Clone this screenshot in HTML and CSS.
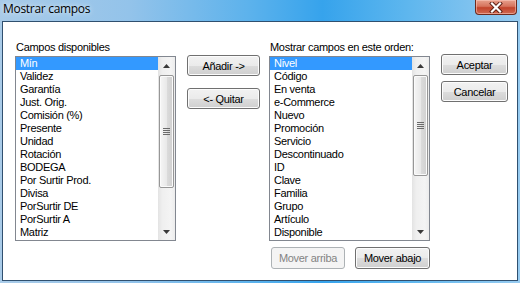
FILE: index.html
```html
<!DOCTYPE html>
<html lang="es">
<head>
    <meta charset="UTF-8">
    <title>Mostrar campos</title>
    <link rel="stylesheet" href="styles.css">
</head>
<body>
    <div class="window">
        <div class="titlebar">
            <span class="title">Mostrar campos</span>
            <div class="close">
                <svg width="14" height="11" viewBox="0 0 14 11">
                    <path d="M3 1.5 L11 9.5 M11 1.5 L3 9.5" stroke="#5a1d12" stroke-width="4" stroke-linecap="square"/>
                    <path d="M3 1.5 L11 9.5 M11 1.5 L3 9.5" stroke="#fff" stroke-width="2.2" stroke-linecap="square"/>
                </svg>
            </div>
        </div>

        <div class="client">
            <!-- available fields -->
            <div class="column">
                <div class="caption">Campos disponibles</div>
                <div class="listbox">
                    <ul class="items">
                        <li class="selected">Mín</li>
                        <li>Validez</li>
                        <li>Garantía</li>
                        <li>Just. Orig.</li>
                        <li>Comisión (%)</li>
                        <li>Presente</li>
                        <li>Unidad</li>
                        <li>Rotación</li>
                        <li>BODEGA</li>
                        <li>Por Surtir Prod.</li>
                        <li>Divisa</li>
                        <li>PorSurtir DE</li>
                        <li>PorSurtir A</li>
                        <li>Matriz</li>
                    </ul>
                    <div class="scrollbar">
                        <div class="arrow"><svg width="7" height="4"><polygon points="0,4 3.5,0 7,4" fill="#3a3a3a"/></svg></div>
                        <div class="track">
                            <div class="thumb" style="height: 113px">
                                <svg width="7" height="7"><path d="M0 0.5h7M0 2.5h7M0 4.5h7M0 6.5h7" stroke="#6b6b6b"/></svg>
                            </div>
                        </div>
                        <div class="arrow"><svg width="7" height="4"><polygon points="0,0 7,0 3.5,4" fill="#3a3a3a"/></svg></div>
                    </div>
                </div>
            </div>

            <div class="mid">
                <button class="btn">Añadir -&gt;</button>
                <button class="btn second">&lt;- Quitar</button>
            </div>

            <!-- chosen fields -->
            <div class="column">
                <div class="caption">Mostrar campos en este orden:</div>
                <div class="listbox">
                    <ul class="items">
                        <li class="selected">Nivel</li>
                        <li>Código</li>
                        <li>En venta</li>
                        <li>e-Commerce</li>
                        <li>Nuevo</li>
                        <li>Promoción</li>
                        <li>Servicio</li>
                        <li>Descontinuado</li>
                        <li>ID</li>
                        <li>Clave</li>
                        <li>Familia</li>
                        <li>Grupo</li>
                        <li>Artículo</li>
                        <li>Disponible</li>
                    </ul>
                    <div class="scrollbar">
                        <div class="arrow"><svg width="7" height="4"><polygon points="0,4 3.5,0 7,4" fill="#3a3a3a"/></svg></div>
                        <div class="track">
                            <div class="thumb" style="height: 101px">
                                <svg width="7" height="7"><path d="M0 0.5h7M0 2.5h7M0 4.5h7M0 6.5h7" stroke="#6b6b6b"/></svg>
                            </div>
                        </div>
                        <div class="arrow"><svg width="7" height="4"><polygon points="0,0 7,0 3.5,4" fill="#3a3a3a"/></svg></div>
                    </div>
                </div>
                <div class="move-row">
                    <button class="btn move" disabled>Mover arriba</button>
                    <button class="btn move wide">Mover abajo</button>
                </div>
            </div>

            <div class="side">
                <button class="btn">Aceptar</button>
                <button class="btn cancel">Cancelar</button>
            </div>
        </div>
    </div>
</body>
</html>
```

FILE: styles.css
```css
* {
    box-sizing: border-box;
}
body {
    margin: 0;
    font-family: "Liberation Sans", Arial, sans-serif;
    font-size: 11px;
    letter-spacing: -0.3px;
    color: #000;
    background: #6fb3e6;
}
.window {
    width: 520px;
    height: 283px;
    display: flex;
    flex-direction: column;
    overflow: hidden;
    background: linear-gradient(90deg, #a9cbe8 0%, #93c3ea 25%, #5cb2ec 48%, #36a3ec 62%, #5db6ee 78%, #97cbf0 100%);
}
.titlebar {
    flex: none;
    height: 21px;
    display: flex;
    justify-content: space-between;
    align-items: flex-start;
}
.title {
    padding-left: 3px;
    font-family: "Open Sans", "Noto Sans", sans-serif;
    font-size: 12px;
    letter-spacing: -0.3px;
    line-height: 17px;
    text-shadow: 0 0 5px rgba(255, 255, 255, 0.9);
}
.close {
    width: 42px;
    height: 15px;
    margin-right: 3px;
    border: 1px solid #6d2a1d;
    border-top: none;
    border-radius: 0 0 4px 4px;
    background: linear-gradient(#e7a08c, #d6735d 45%, #c2432b 55%, #cf6a52);
    box-shadow: inset 0 0 0 1px rgba(255, 210, 200, 0.5);
    display: flex;
    align-items: center;
    justify-content: center;
}
.client {
    flex: 1;
    margin: 0 2px 2px 2px;
    padding: 19px 0 0 12px;
    background: #fff;
    border: 1px solid #30506f;
    display: flex;
    align-items: flex-start;
}
.column {
    width: 161px;
}
.caption {
    line-height: 13px;
    padding-left: 1px;
    white-space: nowrap;
}
.listbox {
    margin-top: 2px;
    height: 185px;
    border: 1px solid #828790;
    display: flex;
}
.items {
    flex: 1;
    margin: 0;
    padding: 0;
    list-style: none;
    overflow: hidden;
}
.items li {
    height: 13px;
    line-height: 13px;
    padding-left: 4px;
    white-space: nowrap;
}
.items li.selected {
    background: #3399ff;
    color: #fff;
}
.scrollbar {
    width: 17px;
    display: flex;
    flex-direction: column;
    background: linear-gradient(90deg, #e3e3e3, #efefef 25%, #f4f4f4 75%, #ececec);
}
.arrow {
    height: 17px;
    display: flex;
    align-items: center;
    justify-content: center;
}
.arrow svg, .thumb svg {
    display: block;
}
.track {
    flex: 1;
}
.thumb {
    margin: 1px 1px 0 1px;
    border: 1px solid #979797;
    border-radius: 2px;
    background: linear-gradient(90deg, #f6f6f6, #e9e9e9 50%, #dcdcdc 51%, #d0d0d0);
    box-shadow: inset 0 0 0 1px #fbfbfb;
    display: flex;
    align-items: center;
    justify-content: center;
}
.btn {
    display: block;
    width: 100%;
    height: 21px;
    padding: 0;
    font: inherit;
    letter-spacing: inherit;
    color: #000;
    border: 1px solid #707070;
    border-radius: 3px;
    background: linear-gradient(#f2f2f2 0%, #ebebeb 50%, #dddddd 51%, #cfcfcf 100%);
    box-shadow: inset 0 0 0 1px #fcfcfc;
}
.btn:disabled {
    color: #838383;
    border-color: #adb2b5;
    background: #f4f4f4;
    box-shadow: none;
}
.mid {
    width: 73px;
    margin-left: 11px;
    padding-top: 14px;
}
.mid .second {
    margin-top: 12px;
}
.move-row {
    display: flex;
    gap: 10px;
    margin-top: 6px;
    padding-left: 2px;
}
.move {
    width: 75px;
    height: 22px;
}
.move.wide {
    width: 76px;
}
.column + .mid + .column {
    margin-left: 9px;
}
.side {
    width: 67px;
    margin-left: 11px;
    padding-top: 13px;
}
.side .cancel {
    margin-top: 6px;
}
```
